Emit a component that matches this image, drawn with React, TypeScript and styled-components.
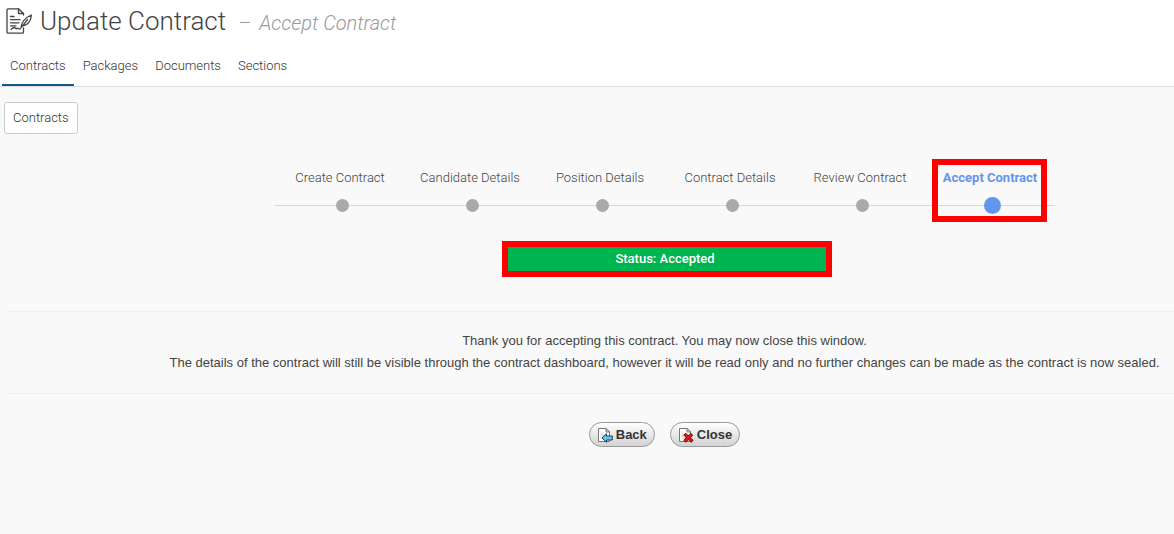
import React from "react";
import styled, { createGlobalStyle } from "styled-components";

const GlobalStyle = createGlobalStyle`
  * { box-sizing: border-box; }
  body {
    margin: 0;
    background: #f9f9f9;
    color: #444;
    font-family: Roboto, "Liberation Sans", sans-serif;
    font-size: 13px;
    font-weight: 300;
  }
`;

const Header = styled.header`
  background: #fff;
  border-bottom: 1px solid #dedede;
`;

const TitleRow = styled.div`
  display: flex;
  align-items: center;
  height: 44px;
  padding-left: 6px;
  gap: 7px;
`;

const Title = styled.h1`
  display: flex;
  align-items: baseline;
  gap: 12px;
  margin: 0;
  font-size: 26px;
  line-height: 44px;
  font-weight: 300;
`;

const Subtitle = styled.small`
  font-size: 20px;
  font-style: italic;
  color: #999;
`;

const Dash = styled.span`
  font-style: normal;
  margin-right: 8px;
`;

const Tabs = styled.nav`
  display: flex;
  gap: 1px;
  padding-left: 2px;
`;

const Tab = styled.a<{ $active?: boolean }>`
  height: 42px;
  padding: 0 8px;
  line-height: 44px;
  color: #333;
  text-decoration: none;
  border-bottom: 2px solid ${(p) => (p.$active ? "#10598a" : "transparent")};
`;

const Toolbar = styled.div`
  padding: 15px 4px 0;
`;

const ToolButton = styled.button`
  height: 32px;
  padding: 0 8px 2px;
  border: 1px solid #ccc;
  border-radius: 3px;
  background: #fff;
  color: #333;
  font: inherit;
`;

const Centered = styled.section`
  display: flex;
  flex-direction: column;
  align-items: center;
  padding-left: 156px;
`;

const Steps = styled.ol`
  display: flex;
  width: 100%;
  max-width: 780px;
  margin: 25px 0 0;
  padding: 0;
  list-style: none;
`;

const Step = styled.li<{ $active?: boolean }>`
  position: relative;
  flex: 1;
  display: flex;
  flex-direction: column;
  align-items: center;
  padding-top: 9px;
  line-height: 20px;
  white-space: nowrap;
  color: ${(p) => (p.$active ? "#6495ed" : "#444")};
  font-weight: ${(p) => (p.$active ? 700 : 300)};
`;

const Track = styled.span`
  display: flex;
  align-items: center;
  justify-content: center;
  width: 100%;
  height: 19px;
  margin-top: 8px;
  padding-left: 4px;
  background: linear-gradient(#d8d8d8, #d8d8d8) center / 100% 1px no-repeat;
`;

const Dot = styled.span<{ $active?: boolean }>`
  width: ${(p) => (p.$active ? 17 : 13)}px;
  height: ${(p) => (p.$active ? 17 : 13)}px;
  border-radius: 50%;
  background: ${(p) => (p.$active ? "#6495ed" : "#a9a9a9")};
`;

const Highlight = styled.span`
  position: absolute;
  inset: 0 8px -7px 7px;
  border: 6px solid #f00;
`;

const Status = styled.div`
  width: 330px;
  height: 36px;
  margin: 26px 0 0 4px;
  padding-right: 4px;
  border: 6px solid #f00;
  background: #00b44f;
  color: #fff;
  font-weight: 500;
  line-height: 23px;
  text-align: center;
`;

const Message = styled.section`
  margin: 34px 0 0 6px;
  padding: 18px 0 19px 149px;
  border-top: 1px solid #eee;
  border-bottom: 1px solid #eee;
  font: 400 13px/22px "Liberation Sans", Arial, sans-serif;
  text-align: center;
`;

const Line = styled.p`
  margin: 0;
`;

const Actions = styled.div`
  display: flex;
  justify-content: center;
  gap: 15px;
  padding: 28px 0 0 155px;
`;

const Action = styled.button`
  display: flex;
  align-items: center;
  gap: 3px;
  height: 25px;
  padding: 0 7px;
  border: 1px solid #999;
  border-radius: 13px;
  background: linear-gradient(#fff, #ececec 40%, #d3d3d3);
  color: #333;
  font: 700 13px/16px "Liberation Sans", Arial, sans-serif;
`;

const ContractIcon = () => (
  <svg width="27" height="28" viewBox="0 0 27 28" fill="none" stroke="#444" strokeWidth="1.3" strokeLinejoin="round" strokeLinecap="round" aria-hidden="true">
    <path d="M17.5 7V5.5L12.5 0.8H2Q1 0.8 1 1.8V24Q1 25.2 2 25.2H16.5Q17.5 25.2 17.5 24V20" />
    <path d="M12.5 1V5.5H17.2" />
    <path d="M4.5 8.5H8M4.5 11.7H14M4.5 14.8H13M4.5 17.8H10" />
    <path d="M5 21.2Q8 18.8 9 19.8T10.5 20.8Q12 19.5 13 20.8H14.5" />
    <path d="M15 19.8C15.5 14.5 18.5 10 25.3 7C25.3 12.6 21.8 17.4 16.5 17.8M15 19.8L21.5 11.5" />
  </svg>
);

const PageShape = () => (
  <>
    <path d="M1.5 1.5H9L12.5 5V14.5H1.5Z" fill="#fff" stroke="#777" />
    <path d="M3.5 12V4Q7 8 10.5 8.5V12Z" fill="#e2e2e2" />
    <path d="M9 1.5V5H12.5Z" fill="#ddd" stroke="#777" />
  </>
);

const BackIcon = () => (
  <svg width="16" height="16" viewBox="0 0 16 16" aria-hidden="true">
    <PageShape />
    <path d="M5 11L9.5 6.8V9H15.3V13H9.5V15.3Z" fill="#6cc3ee" stroke="#173f60" />
  </svg>
);

const CloseIcon = () => (
  <svg width="16" height="16" viewBox="0 0 16 16" aria-hidden="true">
    <PageShape />
    <path d="M6.5 7L14.5 14.5M14 7L6.5 14.5" stroke="#6e0c0c" strokeWidth="3.4" />
    <path d="M7 7.5L14 14M13.5 7.5L7 14" stroke="#e11b1b" strokeWidth="2" />
  </svg>
);

const tabs = ["Contracts", "Packages", "Documents", "Sections"];
const steps = [
  "Create Contract",
  "Candidate Details",
  "Position Details",
  "Contract Details",
  "Review Contract",
  "Accept Contract",
];

export default function App() {
  return (
    <>
      <GlobalStyle />
      <Header>
        <TitleRow>
          <ContractIcon />
          <Title>
            Update Contract
            <Subtitle>
              <Dash>–</Dash>
              Accept Contract
            </Subtitle>
          </Title>
        </TitleRow>
        <Tabs>
          {tabs.map((name, i) => (
            <Tab key={name} href="#" $active={i === 0}>{name}</Tab>
          ))}
        </Tabs>
      </Header>
      <main>
        <Toolbar>
          <ToolButton type="button">Contracts</ToolButton>
        </Toolbar>
        <Centered>
          <Steps>
            {steps.map((name, i) => {
              const active = i === steps.length - 1;
              return (
                <Step key={name} $active={active} aria-current={active ? "step" : undefined}>
                  {name}
                  <Track><Dot $active={active} /></Track>
                  {active && <Highlight />}
                </Step>
              );
            })}
          </Steps>
          <Status role="status">Status: Accepted</Status>
        </Centered>
        <Message>
          <Line>Thank you for accepting this contract. You may now close this window.</Line>
          <Line>
            The details of the contract will still be visible through the contract dashboard, however it
            will be read only and no further changes can be made as the contract is now sealed.
          </Line>
        </Message>
        <Actions>
          <Action type="button"><BackIcon />Back</Action>
          <Action type="button"><CloseIcon />Close</Action>
        </Actions>
      </main>
    </>
  );
}
